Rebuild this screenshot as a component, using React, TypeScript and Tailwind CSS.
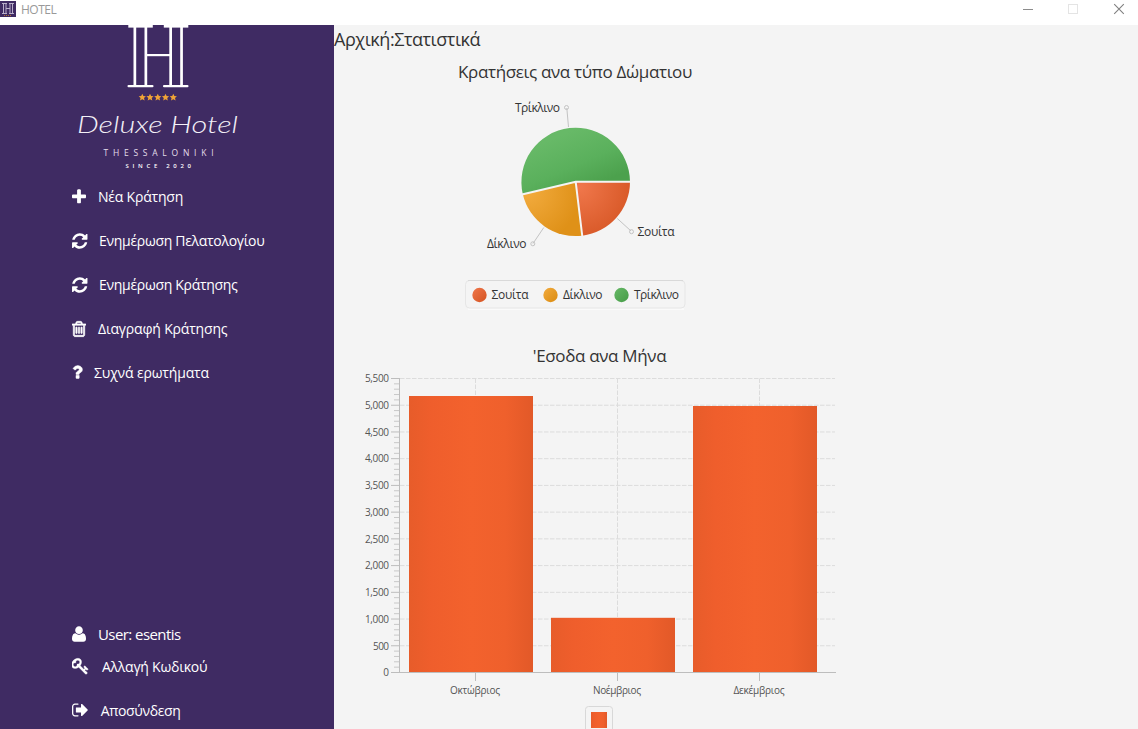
import React from "react";

const ICONS = {
  plus: {
    box: "192 0 1408 1792",
    cls: "w-[14px]",
    d: "M1600 736v192q0 40-28 68t-68 28h-416v416q0 40-28 68t-68 28h-192q-40 0-68-28t-28-68v-416h-416q-40 0-68-28t-28-68v-192q0-40 28-68t68-28h416v-416q0-40 28-68t68-28h192q40 0 68 28t28 68v416h416q40 0 68 28t28 68z",
  },
  refresh: {
    box: "128 0 1536 1792",
    cls: "w-[15.5px]",
    d: "M1639 1056q0 5-1 7-64 268-268 434.5t-478 166.5q-146 0-282.5-55t-243.5-157l-129 129q-19 19-45 19t-45-19-19-45v-448q0-26 19-45t45-19h448q26 0 45 19t19 45-19 45l-137 137q71 66 161 102t187 36q134 0 250-65t186-179q11-17 53-117 8-23 30-23h192q13 0 22.5 9.500t9.500 22.500zm25-800v448q0 26-19 45t-45 19h-448q-26 0-45-19t-19-45 19-45l138-138q-148-137-349-137-134 0-250 65t-186 179q-11 17-53 117-8 23-30 23h-199q-13 0-22.500-9.500t-9.500-22.500v-7q65-268 270-434.500t480-166.500q146 0 284 55.500t245 156.500l130-129q19-19 45-19t45 19 19 45z",
  },
  trash: {
    box: "192 0 1408 1792",
    cls: "w-[14px] stroke-white stroke-[65]",
    d: "M704 736v576q0 14-9 23t-23 9h-64q-14 0-23-9t-9-23v-576q0-14 9-23t23-9h64q14 0 23 9t9 23zm256 0v576q0 14-9 23t-23 9h-64q-14 0-23-9t-9-23v-576q0-14 9-23t23-9h64q14 0 23 9t9 23zm256 0v576q0 14-9 23t-23 9h-64q-14 0-23-9t-9-23v-576q0-14 9-23t23-9h64q14 0 23 9t9 23zm128 724v-948h-896v948q0 22 7 40.500t14.500 27 10.500 8.500h832q3 0 10.500-8.500t14.500-27 7-40.500zm-672-1076h448l-48-117q-7-9-17-11h-317q-10 2-17 11zm928 32v64q0 14-9 23t-23 9h-96v948q0 83-47 143.500t-113 60.500h-832q-66 0-113-58.500t-47-141.500v-952h-96q-14 0-23-9t-9-23v-64q0-14 9-23t23-9h309l70-167q15-37 54-63t79-26h320q40 0 79 26t54 63l70 167h309q14 0 23 9t9 23z",
  },
  question: {
    box: "370 0 1034 1792",
    cls: "w-[10.4px] overflow-visible stroke-white stroke-[50]",
    d: "M1088 1256v240q0 16-12 28t-28 12h-240q-16 0-28-12t-12-28v-240q0-16 12-28t28-12h240q16 0 28 12t12 28zm316-600q0 54-15.500 101t-35 76.500-55 59.500-57.500 43.500-61 35.500q-41 23-68.500 65t-27.500 67q0 17-12 32.500t-28 15.500h-240q-15 0-25.500-18.500t-10.500-37.500v-45q0-83 65-156.500t143-108.500q59-27 84-56t25-76q0-42-46.500-74t-107.500-32q-65 0-108 29-35 25-107 115-13 16-31 16-12 0-25-8l-164-125q-13-10-15.500-25t5.500-28q160-266 464-266 80 0 161 31t146 83 106 127.500 41 158.500z",
  },
  user: {
    box: "192 0 1408 1792",
    cls: "w-[14px]",
    d: "M1600 1405q0 120-73 189.500t-194 69.500h-874q-121 0-194-69.500t-73-189.500q0-53 3.500-103.500t14-109 26.500-108.500 43-97.500 62-81 85.500-53.500 111.500-20q9 0 42 21.500t74.500 48 108 48 133.500 21.500 133.500-21.500 108-48 74.500-48 42-21.500q61 0 111.500 20t85.500 53.500 62 81 43 97.500 26.500 108.500 14 109 3.500 103.500zm-320-893q0 159-112.500 271.500t-271.500 112.500-271.500-112.500-112.500-271.500 112.500-271.500 271.500-112.500 271.500 112.500 112.500 271.500z",
  },
  key: {
    box: "64 0 1700 1792",
    cls: "w-[17px] stroke-white stroke-[30]",
    d: "M832 512q0-80-56-136t-136-56-136 56-56 136q0 42 19 83-41-19-83-19-80 0-136 56t-56 136 56 136 136 56 136-56 56-136q0-42-19-83 41 19 83 19 80 0 136-56t56-136zm851 704q0 17-49 66t-66 49q-9 0-28.500-16t-36.500-33-38.500-40-24.500-26l-96 96 220 220q28 28 28 68 0 42-39 81t-81 39q-40 0-68-28l-671-671q-176 131-365 131-163 0-265.500-102.500t-102.500-265.500q0-160 95-313t248-248 313-95q163 0 265.500 102.500t102.500 265.500q0 189-131 365l355 355 96-96q-3-3-26-24.500t-40-38.500-33-36.500-16-28.500q0-17 49-66t66-49q13 0 23 10 6 6 46 44.500t82 79.500 86.500 86 73 78 28.500 41z",
  },
  signOut: {
    box: "64 0 1568 1792",
    cls: "w-[15.8px]",
    d: "M704 1440q0 4 1 20t.5 26.500-3 23.500-10 19.500-20.500 6.500h-320q-119 0-203.500-84.500t-84.500-203.500v-704q0-119 84.500-203.500t203.500-84.500h320q13 0 22.500 9.500t9.500 22.500q0 4 1 20t.5 26.500-3 23.500-10 19.500-20.500 6.500h-320q-66 0-113 47t-47 113v704q0 66 47 113t113 47h312l11.500 1 11.500 3 8 5.500 7 9 2 13.500zm928-544q0 26-19 45l-544 544q-19 19-45 19t-45-19-19-45v-288h-448q-26 0-45-19t-19-45v-384q0-26 19-45t45-19h448v-288q0-26 19-45t45-19 45 19l544 544q19 19 19 45z",
  },
};

type IconName = keyof typeof ICONS;

function Icon({ name }: { name: IconName }) {
  const icon = ICONS[name];
  return (
    <svg viewBox={icon.box} className={`h-[18px] shrink-0 fill-white ${icon.cls}`}>
      <path d={icon.d} />
    </svg>
  );
}

function NavItem({ icon, label, pad, text }: { icon: IconName; label: string; pad: string; text: string }) {
  return (
    <button className="flex h-11 w-full shrink-0 items-center pb-px pl-[72px] text-left">
      <span className={`flex shrink-0 ${pad}`}>
        <Icon name={icon} />
      </span>
      <span className={`whitespace-nowrap ${text}`}>{label}</span>
    </button>
  );
}

const STAR = "M0-3.6 1.100-1.200 3.600-1 1.700.8 2.300 3.300 0 2-2.300 3.300-1.700.8-3.600-1-1.100-1.200z";

function Logo() {
  return (
    <svg viewBox="0 25 334 150" className="h-[150px] w-[334px] shrink-0">
      <g fill="#fff">
        <rect x="128.300" y="25" width="24.500" height="2.600" />
        <rect x="163.800" y="25" width="24.500" height="2.600" />
        <rect x="127.500" y="85" width="26" height="2.300" rx="1" />
        <rect x="163" y="85" width="25.500" height="2.300" rx="1" />
        <rect x="133.500" y="26" width="2.700" height="60" />
        <rect x="144.500" y="26" width="2.700" height="60" />
        <rect x="169.300" y="26" width="2.700" height="60" />
        <rect x="180.200" y="26" width="2.700" height="60" />
        <rect x="146" y="54" width="25" height="2.200" />
      </g>
      {[142.3, 150, 157.8, 165.5, 173.3].map((x) => (
        <path key={x} d={STAR} transform={`translate(${x} 97.300)`} fill="#f0a436" />
      ))}
      <text x="77" y="133" textLength="161" lengthAdjust="spacingAndGlyphs" fill="#f3f0f7" className="font-['Lato',sans-serif] text-[24px] font-light italic">
        Deluxe Hotel
      </text>
      <text x="103.500" y="156" textLength="110" fill="#e3deea" className="font-['Open_Sans',sans-serif] text-[8.500px]">
        THESSALONIKI
      </text>
      <text x="125.500" y="168" textLength="65.500" fill="#fff" className="font-['Open_Sans',sans-serif] text-[6px] font-semibold">
        SINCE 2020
      </text>
    </svg>
  );
}

function PieChart() {
  return (
    <svg viewBox="334 85 504 240" className="h-[240px] w-[504px] shrink-0 font-['Open_Sans','Noto_Sans',sans-serif] text-[12px]">
      <defs>
        <linearGradient id="green" gradientUnits="userSpaceOnUse" x1="555" y1="138" x2="584" y2="206">
          <stop offset="0" stopColor="#67b967" />
          <stop offset="0.450" stopColor="#5ab05c" />
          <stop offset="0.800" stopColor="#4ca14d" />
        </linearGradient>
        <radialGradient id="amber" gradientUnits="userSpaceOnUse" cx="528" cy="192" r="52">
          <stop offset="0" stopColor="#f2ab3e" />
          <stop offset="1" stopColor="#df9118" />
        </radialGradient>
        <radialGradient id="red" gradientUnits="userSpaceOnUse" cx="580" cy="187" r="50">
          <stop offset="0" stopColor="#f0774b" />
          <stop offset="1" stopColor="#d95a29" />
        </radialGradient>
        <linearGradient id="dotRed" x2="1" y2="1">
          <stop stopColor="#f0774b" />
          <stop offset="0.800" stopColor="#d95a29" />
        </linearGradient>
        <linearGradient id="dotAmber" x2="1" y2="1">
          <stop stopColor="#f2ab3e" />
          <stop offset="0.800" stopColor="#df9118" />
        </linearGradient>
        <linearGradient id="dotGreen" x2="1" y2="1">
          <stop stopColor="#67b967" />
          <stop offset="0.800" stopColor="#4ca14d" />
        </linearGradient>
      </defs>
      <path d="M575.700 181.800H630A54.300 54.300 0 1 0 522.800 194.300Z" fill="url(#green)" />
      <path d="M575.700 181.800L522.800 194.300A54.300 54.300 0 0 0 582.300 235.700Z" fill="url(#amber)" />
      <path d="M575.700 181.800L582.300 235.700A54.300 54.300 0 0 0 630 181.800Z" fill="url(#red)" />
      <path d="M632 181.800H575.700L520.800 194.800M575.700 181.800L582.500 238" fill="none" stroke="#f4f4f4" strokeWidth="2" />
      <g fill="none" stroke="#c3c3c3">
        <path d="M568.500 127L566.800 108M617.300 218.500L631 231M543.800 227.500L533 243.500" />
        <circle cx="566.500" cy="107.500" r="2" />
        <circle cx="631.500" cy="231.700" r="2" />
        <circle cx="532.800" cy="243.800" r="2" />
      </g>
      <g fill="#333">
        <text x="515" y="112" textLength="45">Τρίκλινο</text>
        <text x="637.500" y="236" textLength="37">Σουίτα</text>
        <text x="487" y="248" textLength="39.500">Δίκλινο</text>
      </g>
      <path d="M468 309H684" stroke="#fff" />
      <rect x="465.500" y="280.500" width="219.500" height="27.500" rx="4" fill="#f4f4f4" stroke="#e6e6e6" />
      <path d="M468 280.500H683" stroke="#d9d9d9" />
      <circle cx="479.500" cy="295" r="7.200" fill="url(#dotRed)" />
      <circle cx="550.500" cy="295" r="7.200" fill="url(#dotAmber)" />
      <circle cx="621.500" cy="295" r="7.200" fill="url(#dotGreen)" />
      <g fill="#333">
        <text x="491.500" y="299" textLength="37">Σουίτα</text>
        <text x="563" y="299" textLength="39.500">Δίκλινο</text>
        <text x="634" y="299" textLength="45">Τρίκλινο</text>
      </g>
    </svg>
  );
}

const BASE = 672.5;
const STEP = 294 / 11;
const VALUES = Array.from({ length: 12 }, (_, i) => i * 500);
const MINOR = Array.from({ length: 55 }, (_, i) => i).filter((i) => i % 5 !== 0);
const MONTHS = [
  { name: "Οκτώβριος", x: 409, top: 396, center: 475.5, width: 50 },
  { name: "Νοέμβριος", x: 551, top: 617.8, center: 617.5, width: 48 },
  { name: "Δεκέμβριος", x: 693, top: 406, center: 759.5, width: 51 },
];

function BarChart() {
  return (
    <svg viewBox="334 368 504 361" className="h-[361px] w-[504px] shrink-0 font-['Open_Sans','Noto_Sans',sans-serif] text-[10px]">
      <defs>
        <linearGradient id="bar">
          <stop offset="0" stopColor="#e75c2a" />
          <stop offset="0.180" stopColor="#ef5e2c" />
          <stop offset="0.500" stopColor="#f3622d" />
          <stop offset="0.780" stopColor="#ef602c" />
          <stop offset="1" stopColor="#e25928" />
        </linearGradient>
      </defs>
      <g stroke="#dcdcdc" strokeDasharray="4.500 1.500">
        {VALUES.slice(1).map((v, i) => (
          <path key={v} d={`M400 ${BASE - (i + 1) * STEP}H835`} />
        ))}
        {MONTHS.map((m) => (
          <path key={m.name} d={`M${m.center} 378.500V672`} />
        ))}
      </g>
      <g stroke="#c8c8c8">
        {MINOR.map((i) => (
          <path key={i} d={`M394 ${BASE - (i * STEP) / 5}H399`} />
        ))}
      </g>
      {MONTHS.map((m) => (
        <rect key={m.name} x={m.x} y={m.top} width="124" height={672 - m.top} fill="url(#bar)" />
      ))}
      <g stroke="#bdbdbd">
        {VALUES.map((v, i) => (
          <path key={v} d={`M391 ${BASE - i * STEP}H399`} />
        ))}
        <path d="M399.500 378V673M399 672.500H836" />
        {MONTHS.map((m) => (
          <path key={m.name} d={`M${m.center} 673V681`} />
        ))}
      </g>
      <g fill="#555">
        {VALUES.map((v, i) => (
          <text key={v} x="389" y={Math.round(BASE - i * STEP + 3.8)} textAnchor="end" textLength={v === 0 ? 5 : v === 500 ? 16 : 24}>
            {v.toLocaleString("en-US")}
          </text>
        ))}
        {MONTHS.map((m) => (
          <text key={m.name} x={m.center - 0.5} y="694" textAnchor="middle" textLength={m.width}>
            {m.name}
          </text>
        ))}
      </g>
      <rect x="585.500" y="706.500" width="27" height="30" rx="3" fill="#f4f4f4" stroke="#d8d8d8" />
      <rect x="591" y="712" width="16" height="16" fill="url(#bar)" />
    </svg>
  );
}

function TitleBar() {
  return (
    <header className="flex h-[25px] shrink-0 items-start bg-white">
      <svg viewBox="0 0 16 16" className="mt-px h-4 w-4">
        <rect width="16" height="16" fill="#3f2b63" />
        <path d="M2 2.500H7M9 2.500H14M2 12.500H7M9 12.500H14M3.500 2V13M6 2V13M10 2V13M12.500 2V13M6 7.500H10" stroke="#b9afca" fill="none" />
        <path d="M4 14.500H12" stroke="#b3702f" strokeDasharray="1 1" />
      </svg>
      <span className="ml-[5px] text-[12px] leading-[19px] tracking-[-0.5px] text-[#999]">HOTEL</span>
      <svg viewBox="1018 0 120 25" className="ml-auto h-[25px] w-[120px]" fill="none">
        <path d="M1023 9.500H1033" stroke="#8c8c8c" />
        <rect x="1068.500" y="4.500" width="9" height="9" stroke="#e4e4e4" />
        <path d="M1114.200 4.200L1123.800 13.800M1123.800 4.200L1114.200 13.800" stroke="#808080" strokeWidth="1.100" />
      </svg>
    </header>
  );
}

export default function App() {
  return (
    <div className="flex h-[729px] w-[1138px] flex-col overflow-hidden bg-[#f4f4f4] font-['Open_Sans','Noto_Sans',sans-serif]">
      <TitleBar />
      <div className="flex min-h-0 flex-1">
        <aside className="flex w-[334px] shrink-0 flex-col overflow-hidden bg-[#3f2b63] text-[14px] text-white">
          <Logo />
          <nav className="flex flex-col">
            <NavItem icon="plus" label="Νέα Κράτηση" pad="pr-3" text="tracking-[-0.2px]" />
            <NavItem icon="refresh" label="Ενημέρωση Πελατολογίου" pad="pr-[11.500px]" text="tracking-[-0.3px]" />
            <NavItem icon="refresh" label="Ενημέρωση Κράτησης" pad="pr-[11.500px]" text="tracking-[-0.3px]" />
            <NavItem icon="trash" label="Διαγραφή Κράτησης" pad="pr-3" text="tracking-[-0.18px]" />
            <NavItem icon="question" label="Συχνά ερωτήματα" pad="pb-0.5 pr-[11.600px]" text="tracking-[-0.16px]" />
          </nav>
          <div className="mt-[229px] flex h-[21px] shrink-0 items-center pb-px pl-[72px]">
            <Icon name="user" />
            <span className="ml-3 text-[15px] tracking-[-0.57px]">User: esentis</span>
          </div>
          <NavItem icon="key" label="Αλλαγή Κωδικού" pad="pb-0.5 pr-[13px]" text="tracking-[-0.24px]" />
          <NavItem icon="signOut" label="Αποσύνδεση" pad="pb-px pr-[13px]" text="tracking-[-0.36px]" />
        </aside>
        <main className="flex min-w-0 flex-1 flex-col overflow-hidden text-[#333]">
          <h1 className="h-[30px] shrink-0 text-[18px] leading-[29px] tracking-[-0.45px]">Αρχική:Στατιστικά</h1>
          <section className="flex w-[504px] shrink-0 flex-col">
            <h2 className="h-[30px] shrink-0 pr-[22px] text-center text-[17px] leading-[34px] tracking-[-0.34px]">Κρατήσεις ανα τύπο Δώματιου</h2>
            <PieChart />
          </section>
          <section className="flex w-[504px] shrink-0 flex-col pt-[13px]">
            <h2 className="h-[30px] shrink-0 pl-[27px] text-center text-[17px] leading-[36px] tracking-[-0.34px]">'Εσοδα ανα Μήνα</h2>
            <BarChart />
          </section>
        </main>
      </div>
    </div>
  );
}
